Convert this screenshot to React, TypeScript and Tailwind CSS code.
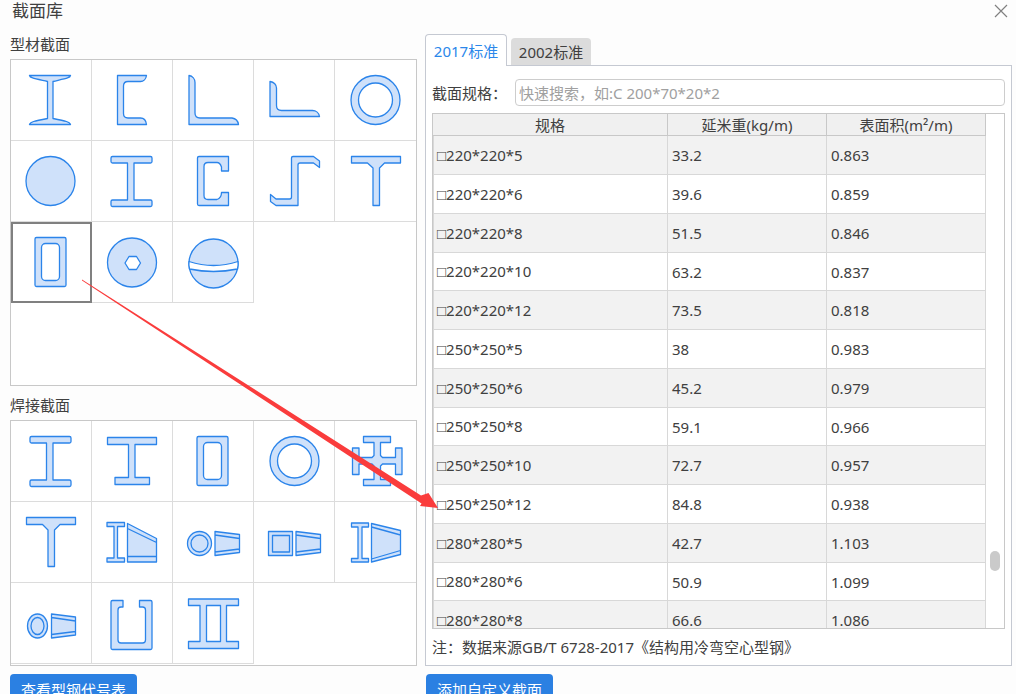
import { useState } from 'react'
import type { ReactNode } from 'react'

interface Section {
  name: string
  icon: ReactNode
}

interface Row {
  spec: string
  weight: string
  area: string
}

const CONE = 'M42 29.5L66.5 32.5V50.5L42 53.5ZM42 33L66.5 36.5M42 50L66.5 47'

const iBeam = (
  <path d="M20.5 15.5H58.5Q60 15.5 60 17V20.5Q60 22 58.5 22H42V59H58.5Q60 59 60 60.5V64Q60 65.5 58.5 65.5H20.5Q19 65.5 19 64V60.5Q19 59 20.5 59H35.5V22H20.5Q19 22 19 20.5V17Q19 15.5 20.5 15.5Z" />
)
const tube = (
  <>
    <rect x="24" y="15.5" width="31" height="49" rx="1.5" />
    <rect x="30.5" y="21.5" width="18" height="37" rx="4" fill="#fff" />
  </>
)
const ring = (
  <>
    <circle cx="40.5" cy="40" r="24.5" />
    <circle cx="40.5" cy="40" r="17" fill="#fff" />
  </>
)

const PROFILES: Section[] = [
  {
    name: '工字钢',
    icon: <path d="M18.5 15.5H59.5C59 18 55 18.5 42 21.5V58.5C55 61 59 62 59.5 64.5H18.5C19 62 23 61 36.5 58.5V21.5C23 18.5 19 18 18.5 15.5Z" />,
  },
  {
    name: '槽钢',
    icon: <path d="M25.5 15.5H54.5C54 19 51.5 21.5 48.5 21.5H36Q31.5 21.5 31.5 26V53.5Q31.5 58 36 58H48.5C51.5 58 54 60.5 54.5 64.5H25.5Z" />,
  },
  {
    name: '等边角钢',
    icon: <path d="M16 15.5C19.5 16 22 19 22 22.5V53Q22 58 27 58H59C62.5 58.5 65 61 65.5 64.5H16Z" />,
  },
  {
    name: '不等边角钢',
    icon: <path d="M16 21.5C20 22 22.5 25 22.5 28V45.5Q22.5 50.5 27.5 50.5H58.5C62 50.5 65 53 65.5 56.5H16Z" />,
  },
  { name: '圆管', icon: ring },
  { name: '圆钢', icon: <circle cx="39.5" cy="40" r="24.5" /> },
  { name: 'H型钢', icon: iBeam },
  {
    name: 'C型钢',
    icon: <path d="M26 15.5H55.5V30H48.5V26Q47 21.5 44 21.5H35Q31 21.5 31 25.5V54.5Q31 58.5 35 58.5H44Q48.5 57 48.5 51.5H55.5V64.5H26Q24.5 64.5 24.5 63V17Q24.5 15.5 26 15.5Z" />,
  },
  {
    name: 'Z型钢',
    icon: <path d="M39 15.5H59.5L65.5 20V26.5L59.5 22H46Q44 22 44 24V64.5H22L16.5 60.5V53.5L22 58H35.5Q37.5 58 37.5 56V17Q37.5 15.5 39 15.5Z" />,
  },
  { name: 'T型钢', icon: <path d="M16.5 15.5H65.5V22H49.5L44.5 27V64.5H38V27L32.5 22H16.5Z" /> },
  { name: '矩形管', icon: tube },
  {
    name: '螺栓球',
    icon: (
      <>
        <circle cx="40" cy="40.5" r="24.5" />
        <path d="M37 34.5H44.5L48.5 41L44.5 47.5H37L33 41Z" fill="#fff" />
      </>
    ),
  },
  {
    name: '焊接球',
    icon: (
      <>
        <circle cx="40.5" cy="41.5" r="24.5" />
        <path d="M16 39.5Q40.5 47.5 65 39.5Q65.5 43 64.5 47Q40.5 52 16.5 47Q15.5 43 16 39.5Z" fill="#fff" />
      </>
    ),
  },
]

const WELDED: Section[] = [
  { name: '焊接H型', icon: iBeam },
  { name: '不等翼缘H型', icon: <path d="M15.5 16.5H64.5V23.5H43V56.5H57.5V63.5H23V56.5H36.5V23.5H15.5Z" /> },
  { name: '焊接箱型', icon: tube },
  { name: '焊接圆管', icon: ring },
  {
    name: '十字型',
    icon: <path d="M28.5 15.5H55.5V21.5H45.5V34.5L47.5 36.5H60.5V27H67V53.5H60.5V43H47.5L45.5 45V58.5H55.5V64.5H28.5V58.5H39V45L37 43H24V53.5H17.5V27H24V36.5H37L39 34.5V21.5H28.5Z" />,
  },
  { name: '焊接T型', icon: <path d="M15.5 15.5H64.5V22.5H49L43.5 28V64.5H37V28L31.5 22.5H15.5Z" /> },
  {
    name: '变截面H型',
    icon: (
      <path d="M15 20.5H32.5V24.5H25.5V56H32.5V60H15V56H22V24.5H15ZM35.5 21.5L64.5 36.5V60H35.5ZM35.5 26.5L64.5 40.5M35.5 54.5H64.5" />
    ),
  },
  {
    name: '变截面圆管',
    icon: (
      <>
        <circle cx="26.5" cy="41.5" r="12" />
        <circle cx="26.5" cy="41.5" r="8.5" />
        <path d={CONE} />
      </>
    ),
  },
  {
    name: '变截面箱型',
    icon: (
      <>
        <rect x="14.5" y="29.5" width="24" height="24" />
        <rect x="18.5" y="33.5" width="17" height="16.5" />
        <path d={CONE} />
      </>
    ),
  },
  {
    name: '双变截面H型',
    icon: (
      <path d="M16.5 21H33.5V25H27V56.5H33.5V60H16.5V56.5H23V25H16.5ZM36.5 21.5L65.5 28.5V52.5L36.5 60ZM36.5 25L65.5 33M36.5 57L65.5 48.5" />
    ),
  },
  {
    name: '变截面椭圆管',
    icon: (
      <>
        <ellipse cx="26.5" cy="43" rx="10" ry="12" />
        <ellipse cx="26.5" cy="43" rx="6.5" ry="8.5" />
        <path d="M40.5 31L64.5 34V52L40.5 55ZM40.5 34.5L64.5 38M40.5 51.5L64.5 48.5" />
      </>
    ),
  },
  {
    name: '卷边槽型',
    icon: <path d="M20.5 17.5H31V24H29Q26 24 26 27V57Q26 60 29 60H50.5Q53.5 60 53.5 57V27Q53.5 24 50.5 24H47.5V17.5H58.5Q60 17.5 60 19V65Q60 66.5 58.5 66.5H20.5Q19 66.5 19 65V19Q19 17.5 20.5 17.5Z" />,
  },
  {
    name: '双腹板型',
    icon: (
      <>
        <path d="M15.5 16H65.5V22.5H53.5V58.5H65.5V65.5H15.5V58.5H27V22.5H15.5Z" />
        <rect x="33.5" y="22.5" width="14" height="36" fill="#fff" />
      </>
    ),
  },
]

const ROWS: Row[] = [
  { spec: '220*220*5', weight: '33.2', area: '0.863' },
  { spec: '220*220*6', weight: '39.6', area: '0.859' },
  { spec: '220*220*8', weight: '51.5', area: '0.846' },
  { spec: '220*220*10', weight: '63.2', area: '0.837' },
  { spec: '220*220*12', weight: '73.5', area: '0.818' },
  { spec: '250*250*5', weight: '38', area: '0.983' },
  { spec: '250*250*6', weight: '45.2', area: '0.979' },
  { spec: '250*250*8', weight: '59.1', area: '0.966' },
  { spec: '250*250*10', weight: '72.7', area: '0.957' },
  { spec: '250*250*12', weight: '84.8', area: '0.938' },
  { spec: '280*280*5', weight: '42.7', area: '1.103' },
  { spec: '280*280*6', weight: '50.9', area: '1.099' },
  { spec: '280*280*8', weight: '66.6', area: '1.086' },
]

interface GridProps {
  items: Section[]
  selected: string
  onSelect: (name: string) => void
  className: string
}

function SectionGrid({ items, selected, onSelect, className }: GridProps) {
  return (
    <div className={`grid grid-cols-5 content-start border border-[#c8c8c8] bg-white ${className}`}>
      {items.map((s, idx) => (
        <button
          key={s.name}
          type="button"
          aria-label={s.name}
          aria-pressed={selected === s.name}
          onClick={() => onSelect(s.name)}
          className={`h-[81px] border-b border-[#dcdcdc] ${idx % 5 === 4 ? '' : 'border-r'} ${
            selected === s.name ? 'outline-2 -outline-offset-2 outline-[#808080]' : ''
          }`}
        >
          <svg width="80" height="80" viewBox="0 0 80 80" fill="#cfe1fa" stroke="#2b84ea" strokeWidth="1.3" strokeLinejoin="round">
            {s.icon}
          </svg>
        </button>
      ))}
    </div>
  )
}

export default function App() {
  const [selected, setSelected] = useState('矩形管')
  const [tab, setTab] = useState('2017标准')
  const [query, setQuery] = useState('')

  const rows = ROWS.filter((r) => r.spec.includes(query.trim()))

  return (
    <div className="relative h-screen overflow-hidden bg-[#fdfdfd] font-['Noto_Sans','Noto_Sans_CJK_SC',sans-serif] text-[15px] leading-5 text-[#404040]">
      <header className="flex h-[22px] items-center justify-between pl-3 pr-2">
        <h1 className="text-[17px]">截面库</h1>
        <button type="button" aria-label="关闭">
          <svg width="14" height="14" viewBox="0 0 14 14" stroke="#808080" strokeWidth="1.2">
            <path d="M1 1L13 13M13 1L1 13" />
          </svg>
        </button>
      </header>

      <main className="flex gap-2 pl-2.5 pr-1">
        <div className="w-[407px] shrink-0 pt-[7px]">
          <h2 className="flex h-[30px] items-center">型材截面</h2>
          <SectionGrid items={PROFILES} selected={selected} onSelect={setSelected} className="min-h-[327px]" />
          <h2 className="mt-1 flex h-[30px] items-center">焊接截面</h2>
          <SectionGrid items={WELDED} selected={selected} onSelect={setSelected} className="min-h-[246px]" />
          <button type="button" className="mt-2 h-8 rounded bg-[#2b80e2] px-[11px] text-white">
            查看型钢代号表
          </button>
        </div>

        <div className="min-w-0 flex-1 pt-3">
          <div role="tablist" className="flex h-8 items-end gap-1">
            {['2017标准', '2002标准'].map((t) => (
              <button
                key={t}
                type="button"
                role="tab"
                aria-selected={tab === t}
                onClick={() => setTab(t)}
                className={
                  tab === t
                    ? 'relative z-10 h-8 w-[82px] rounded-t border border-b-0 border-[#c5c9d2] bg-white text-[#2b87ea]'
                    : 'mb-px h-[27px] w-20 rounded-t bg-[#dcdcdc]'
                }
              >
                {t}
              </button>
            ))}
          </div>
          <div className="-mt-px border border-[#c5c9d2] bg-white px-1.5 pt-[13px]">
            <div className="flex items-center">
              <label htmlFor="spec-search" className="w-[83px] shrink-0">
                截面规格：
              </label>
              <input
                id="spec-search"
                type="text"
                className="h-[27px] min-w-0 flex-1 rounded border border-[#cdcdcd] px-[3px] outline-none placeholder:text-[#a0a0a0]"
                placeholder="快速搜索，如:C 200*70*20*2"
                value={query}
                onChange={(e) => setQuery(e.target.value)}
              />
            </div>

            <div className="relative mt-[7px] flex h-[516px] items-start overflow-hidden border border-[#c8c8c8] pr-[18px]">
              <table className="w-full table-fixed border-separate border-spacing-0">
                <thead>
                  <tr className="h-[22px] bg-[#f0f0f0]">
                    <th className="border-b border-r border-[#c8c8c8] p-0 font-normal">规格</th>
                    <th className="w-[159px] border-b border-r border-[#c8c8c8] p-0 font-normal">延米重(kg/m)</th>
                    <th className="w-[159px] border-b border-r border-[#c8c8c8] p-0 font-normal">表面积(m²/m)</th>
                  </tr>
                </thead>
                <tbody>
                  {rows.map((r) => (
                    <tr key={r.spec} className="h-[39px] odd:bg-[#f2f2f2] nth-[4n]:h-[38px]">
                      <td className="border-b border-l border-r border-[#d8d8d8] py-0 pl-[3px]">
                        <span className="font-['Liberation_Sans',sans-serif]">□</span>
                        {r.spec}
                      </td>
                      <td className="border-b border-r border-[#d8d8d8] py-0 pl-1">{r.weight}</td>
                      <td className="border-b border-r border-[#d8d8d8] py-0 pl-1">{r.area}</td>
                    </tr>
                  ))}
                </tbody>
              </table>
              <div className="absolute right-1 top-[437px] h-5 w-2.5 rounded-full bg-[#cacaca]" />
            </div>

            <p className="flex h-9 items-center">注：数据来源GB/T 6728-2017《结构用冷弯空心型钢》</p>
          </div>
          <button type="button" className="ml-px mt-2 h-8 rounded bg-[#2b80e2] px-[11px] text-white">
            添加自定义截面
          </button>
        </div>
      </main>

      <svg className="pointer-events-none absolute left-0 top-0 z-20" width="450" height="520" viewBox="0 0 450 520" fill="#fa3c3c">
        <path d="M82 279.5L421 495.5L428.5 493L438 508L420 506L421.5 503.5L82 280.5Z" />
      </svg>
    </div>
  )
}
